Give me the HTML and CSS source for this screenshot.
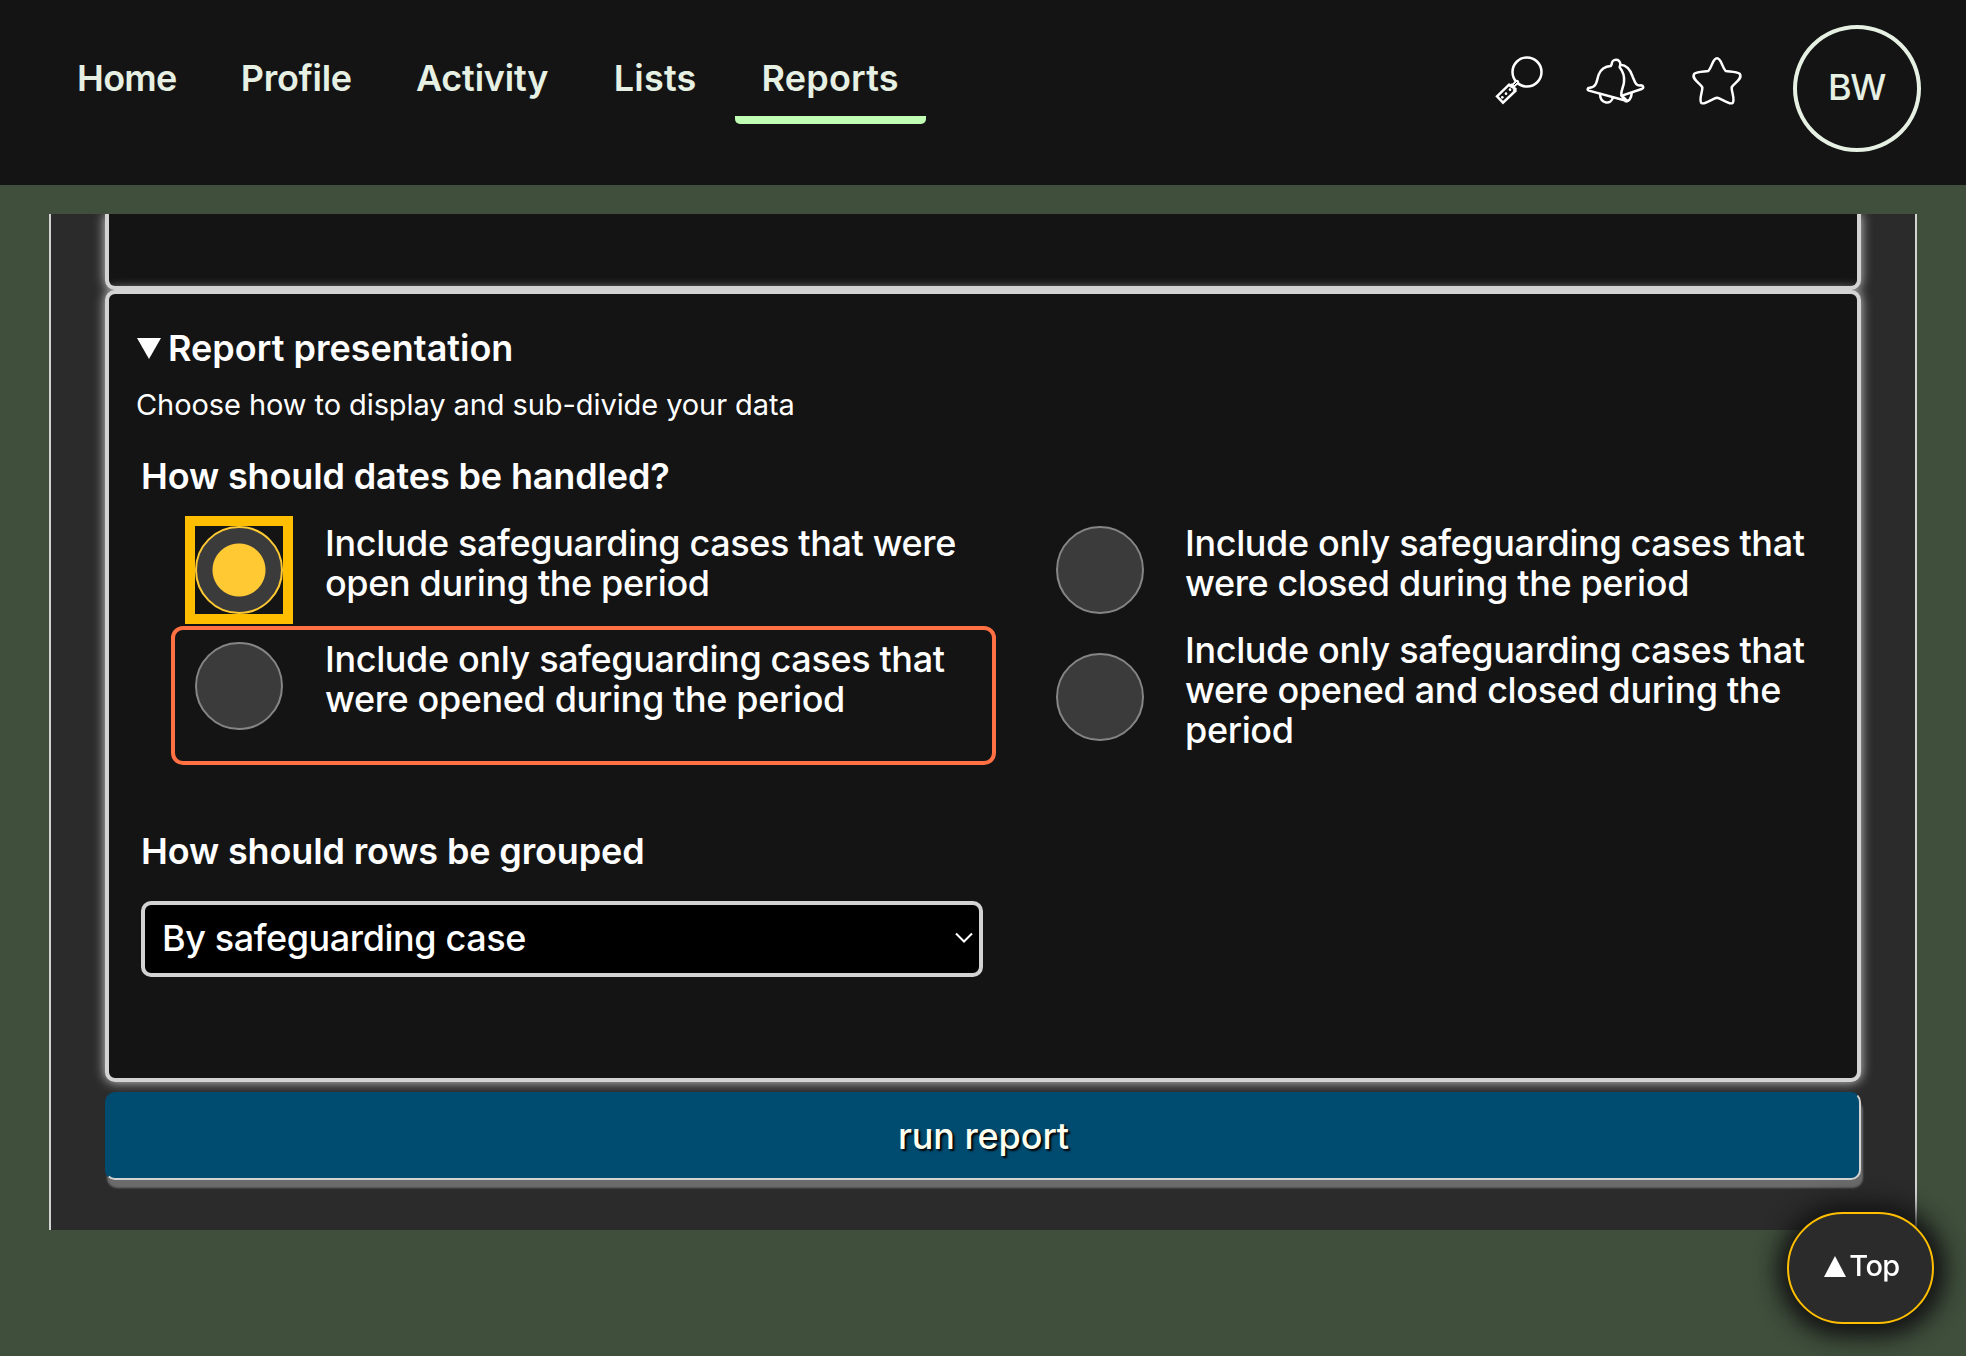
FILE: index.html
```html
<!DOCTYPE html>
<html lang="en">
<head>
<meta charset="utf-8">
<title>Reports</title>
<link rel="stylesheet" href="styles.css">
</head>
<body>
<header class="header">
  <nav class="nav">
    <a class="nav-link nav-home">Home</a>
    <a class="nav-link nav-profile">Profile</a>
    <a class="nav-link nav-activity">Activity</a>
    <a class="nav-link nav-lists">Lists</a>
    <a class="nav-link nav-reports active">Reports</a>
  </nav>
  <div class="tools">
    <svg class="icon" width="60" height="60" viewBox="0 0 180 180">
      <circle cx="111" cy="66" r="43.500"/>
      <path d="M81 96 L68 109" stroke-width="13"/>
      <path d="M80 97 L72 105" stroke="#141414" stroke-width="3"/>
      <path d="M21 139 L57 104 L61 108 L64 105 L76 117 L73 120 L76 123 L39 158 Z" stroke-linejoin="miter"/>
      <g class="grip"><circle cx="37" cy="142" r="4"/><circle cx="48" cy="131" r="4"/><circle cx="60" cy="119" r="4"/></g>
    </svg>
    <svg class="icon" width="70" height="60" viewBox="0 0 210 180">
      <path d="M95 43 C95 25 121 24 121 43 L119 52 C130 66 134 78 132 96 C131 112 122 119 124 137 L141 153 L27 122 C21 120 22 112 30 113 C51 111 50 91 56 74 C63 56 75 49 92 48 Z"/>
      <path d="M121 44 C143 45 152 61 158 80 C166 99 167 108 183 106 C191 107 192 115 185 117 L126 137 M141 153 L127 139"/>
      <path d="M60 132 C61 163 94 165 99 142 M137 154 C146 155 154 146 155 130"/>
    </svg>
    <svg class="icon" width="70" height="60" viewBox="660 120 210 180">
      <path d="M745 183 C757 170 758 145 771 145 C784 145 785 170 797 183 C812 185 830 184 839 191 C850 207 821 220 815 232 C814 244 826 270 818 279 C806 286 784 264 771 263 C758 264 736 286 724 279 C716 270 728 244 727 232 C721 220 692 207 703 191 C712 184 730 185 745 183 Z"/>
    </svg>
    <div class="avatar"><span>BW</span></div>
  </div>
</header>
<main class="panel">
  <section class="box box-previous"></section>
  <section class="box box-report">
    <h2 class="summary"><svg width="24" height="21" viewBox="0 0 24 21"><path d="M0 0H24L12 21Z" fill="#fff"/></svg>Report presentation</h2>
    <p class="hint">Choose how to display and sub-divide your data</p>
    <h3 class="question">How should dates be handled?</h3>
    <div class="options">
      <div class="option"><span class="radio checked"></span><span class="label">Include safeguarding cases that were open during the period</span></div>
      <div class="option"><span class="radio"></span><span class="label">Include only safeguarding cases that were closed during the period</span></div>
      <div class="option hovered"><span class="radio"></span><span class="label">Include only safeguarding cases that were opened during the period</span></div>
      <div class="option tall"><span class="radio"></span><span class="label">Include only safeguarding cases that were opened and closed during the period</span></div>
    </div>
    <h3 class="question question-rows">How should rows be grouped</h3>
    <div class="select" role="combobox"><span>By safeguarding case</span><svg width="20" height="12" viewBox="0 0 20 12"><path d="M2 1.500L10 9.500L18 1.500" fill="none" stroke="#fff" stroke-width="2"/></svg></div>
  </section>
  <button class="run">run report</button>
</main>
<a class="to-top"><svg width="22" height="21" viewBox="0 0 22 21"><path d="M0 21H22L11 0Z" fill="#fff"/></svg><span>Top</span></a>
</body>
</html>
```
FILE: styles.css
```css
* { box-sizing: border-box; }
body {
  margin: 0;
  height: 1356px;
  overflow: hidden;
  background: #3f4f3c;
  color: #fff;
  font: 500 36px/40px Inter, sans-serif;
}
h2, h3, p { margin: 0; }
.header {
  display: flex;
  justify-content: space-between;
  height: 185px;
  padding: 0 45px 0 51px;
  background: #141414;
  color: #e6f0e3;
}
.nav { display: flex; align-items: flex-start; gap: 12px; padding-top: 58px; }
.nav-link {
  padding: 0 26px 18px;
  border-bottom: 8px solid transparent;
  border-radius: 0 0 5px 5px;
  font-weight: 600;
}
.nav-link.active { border-bottom-color: #c1ffb4; }
.nav-home { letter-spacing: -0.7px; }
.nav-profile { letter-spacing: -0.25px; }
.nav-activity { letter-spacing: -0.2px; }
.nav-lists { margin-left: 1.5px; letter-spacing: 0.2px; }
.nav-reports { padding: 0 27px 18px; letter-spacing: 0.2px; }
.tools { display: flex; align-items: flex-start; gap: 30px; }
.icon {
  margin-top: 50px;
  fill: none;
  stroke: #fff;
  stroke-width: 7.5;
  stroke-linecap: round;
  stroke-linejoin: round;
}
.icon .grip { stroke: none; fill: #fff; }
.avatar {
  display: flex;
  align-items: center;
  justify-content: center;
  width: 128px;
  height: 127px;
  margin: 25px 0 0 13px;
  padding: 0 1px 3px 0;
  border: 4px solid #e6f0e3;
  border-radius: 50%;
  letter-spacing: -1.4px;
}
.panel {
  width: 1868px;
  height: 1016px;
  margin: 29px 0 0 49px;
  padding: 0 54px;
  overflow: hidden;
  border: solid lightgray;
  border-width: 0 2px;
  background: #2b2b2b;
}
.box {
  border: 4px solid lightgray;
  border-radius: 10px;
  background: #141414;
  box-shadow: 0 0 12px lightgray;
}
.box-previous { height: 76px; border-top: 0; border-radius: 0 0 10px 10px; }
.box-report { height: 792px; padding: 34px 0 0 28px; }
.summary {
  display: flex;
  align-items: center;
  gap: 7px;
  font-size: 36px;
  font-weight: 600;
}
.hint { margin: 17px 0 0 -1px; font-size: 29px; font-weight: 400; letter-spacing: -0.08px; }
.question {
  margin: 31px 0 0 4px;
  font-size: 36px;
  font-weight: 600;
  letter-spacing: -0.14px;
}
.options {
  display: grid;
  grid-template-columns: 825px 825px;
  grid-template-rows: 116px 139px;
  column-gap: 36px;
  margin: 14px 0 0 34px;
}
.option {
  display: flex;
  align-items: flex-start;
  gap: 42px;
  padding: 12px 0 0 20px;
  border: 4px solid transparent;
  border-radius: 12px;
  letter-spacing: -0.37px;
}
.option:nth-child(even) { gap: 41px; }
.option.hovered { border-color: #ff7043; }
.radio {
  flex: none;
  width: 88px;
  height: 88px;
  border: 2px solid #858585;
  border-radius: 50%;
  background: #3b3b3b;
}
.radio.checked {
  border-color: #ffc933;
  background: radial-gradient(circle, #ffc933 26px, #3b3b3b 27px);
  position: relative;
}
/* square focus ring around the round control */
.radio.checked::after {
  content: "";
  position: absolute;
  inset: -12px;
  border: 10px solid #ffbf00;
}
.label { flex: 1; margin-top: -3px; }
.tall { padding-top: 0; }
.tall .radio { margin-top: 23px; }
.tall .label { margin-top: 0; }
.question-rows { margin-top: 66px; }
.select {
  display: flex;
  align-items: center;
  justify-content: space-between;
  width: 842px;
  height: 76px;
  margin: 30px 0 0 4px;
  padding: 0 5px 2px 17px;
  border: 4px solid lightgray;
  border-radius: 10px;
  background: #000;
  letter-spacing: -0.42px;
}
.run {
  display: block;
  width: 100%;
  height: 88px;
  margin-top: 10px;
  padding: 0;
  border: 2px solid #004b70;
  border-right-color: lightgray;
  border-bottom-color: lightgray;
  border-radius: 10px;
  background: #004b70;
  box-shadow: 2px 8px 2px #6b6b6b;
  color: ivory;
  font: inherit;
  letter-spacing: -0.1px;
  text-indent: 1px;
  text-shadow: 2px 2px 2px #000;
}
.to-top {
  position: fixed;
  left: 1787px;
  top: 1212px;
  display: flex;
  align-items: center;
  justify-content: center;
  gap: 3px;
  width: 147px;
  height: 112px;
  padding-left: 3px;
  border: 2px solid #ffbf00;
  border-radius: 56px;
  background: #2b2b2b;
  box-shadow: 1px 2px 22px 11px #141414;
  font-size: 29px;
  letter-spacing: -0.6px;
}
.to-top svg { margin-bottom: 3px; }
.to-top span { margin-bottom: 4px; }
```
